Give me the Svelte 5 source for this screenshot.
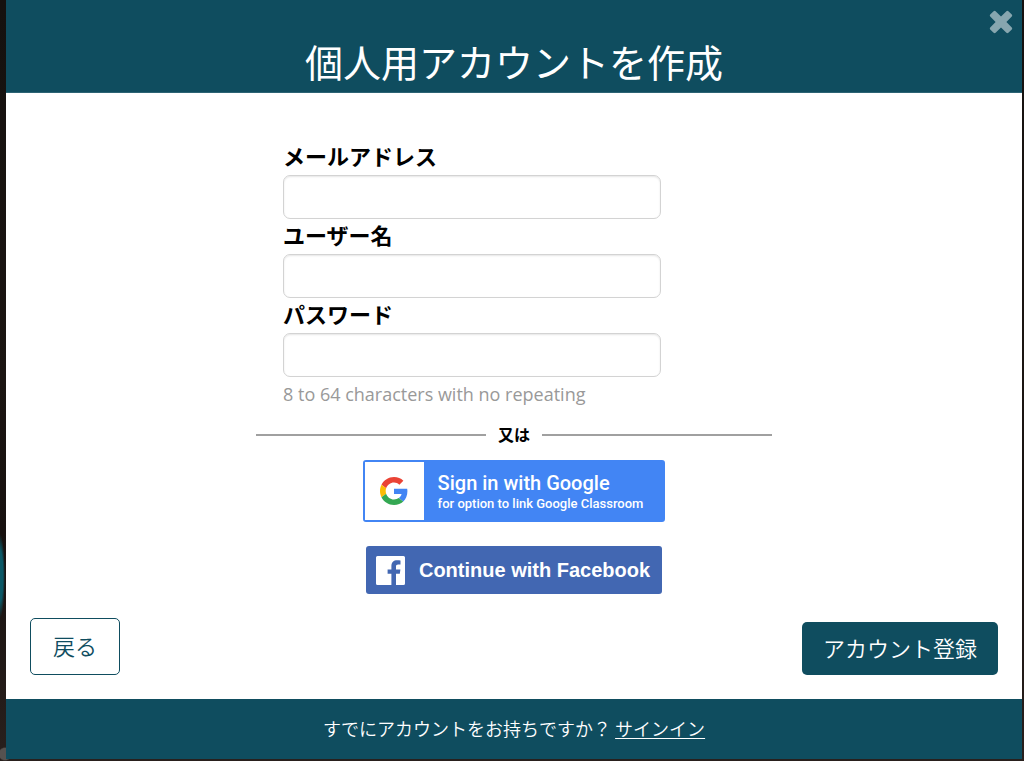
<script>
  let email = $state('');
  let username = $state('');
  let password = $state('');
</script>

<div class="backdrop">
  <section class="dialog" aria-labelledby="title">
    <header>
      <h1 id="title">個人用アカウントを作成</h1>
      <button class="close" type="button" aria-label="閉じる">
        <svg viewBox="0 0 24 24" width="24" height="24" aria-hidden="true">
          <path d="M6.6 1.2 12 6.6l5.4-5.4q1-.9 2 0l3.4 3.4q.9 1 0 2L17.400 12l5.400 5.400q.9 1 0 2l-3.400 3.400q-1 .9-2 0L12 17.400l-5.400 5.400q-1 .9-2 0l-3.400-3.400q-.9-1 0-2L6.600 12 1.200 6.600q-.9-1 0-2l3.400-3.400q1-.9 2 0z" />
        </svg>
      </button>
    </header>

    <form onsubmit={(event) => event.preventDefault()}>
      <div class="center">
        <div class="fields">
          <label for="email">メールアドレス</label>
          <input id="email" type="email" bind:value={email} />
          <label for="username">ユーザー名</label>
          <input id="username" type="text" bind:value={username} />
          <label for="password">パスワード</label>
          <input id="password" type="password" bind:value={password} aria-describedby="hint" />
          <p id="hint">8 to 64 characters with no repeating</p>
        </div>

        <div class="divider"><span>又は</span></div>

        <div class="social">
          <button class="google" type="button">
            <span class="mark">
              <svg viewBox="0 0 48 48" width="28" height="28" aria-hidden="true">
                <path fill="#ea4335" d="M24 9.500c3.540 0 6.710 1.220 9.210 3.600l6.850-6.850C35.900 2.380 30.470 0 24 0 14.620 0 6.510 5.380 2.560 13.220l7.980 6.190C12.430 13.720 17.740 9.500 24 9.500z" />
                <path fill="#4285f4" d="M46.980 24.550c0-1.570-.15-3.090-.38-4.550H24v9.020h12.940c-.58 2.960-2.260 5.480-4.780 7.180l7.730 6c4.510-4.180 7.090-10.360 7.090-17.650z" />
                <path fill="#fbbc05" d="M10.530 28.590c-.48-1.450-.76-2.990-.76-4.590s.27-3.140.76-4.590l-7.980-6.190C.92 16.460 0 20.120 0 24s.92 7.540 2.560 10.780l7.970-6.190z" />
                <path fill="#34a853" d="M24 48c6.480 0 11.930-2.130 15.890-5.810l-7.730-6c-2.150 1.450-4.920 2.300-8.160 2.300-6.260 0-11.570-4.220-13.470-9.910l-7.980 6.190C6.510 42.620 14.620 48 24 48z" />
              </svg>
            </span>
            <span class="copy">
              <span class="main">Sign in with Google</span>
              <span class="sub">for option to link Google Classroom</span>
            </span>
          </button>

          <button class="facebook" type="button">
            <svg viewBox="0 0 29 29" width="29" height="29" aria-hidden="true">
              <path fill="#fff" d="M1.500 0h26A1.500 1.500 0 0 1 29 1.500v26a1.500 1.500 0 0 1-1.500 1.500H20V17.800h3.800l.6-4.400H20v-2.800c0-1.300.4-2.100 2.200-2.100h2.300V4.500c-.4-.1-1.800-.2-3.400-.2-3.400 0-5.700 2-5.700 5.800v3.300h-3.800v4.400h3.800V29H1.500A1.500 1.500 0 0 1 0 27.500v-26A1.500 1.500 0 0 1 1.500 0z" />
            </svg>
            <span>Continue with Facebook</span>
          </button>
        </div>
      </div>

      <div class="actions">
        <button class="back" type="button">戻る</button>
        <button class="submit" type="submit">アカウント登録</button>
      </div>
    </form>

    <footer>
      <span>すでにアカウントをお持ちですか？</span>
      <a href="#signin">サインイン</a>
    </footer>
  </section>
</div>

<style>
  :global(body) {
    margin: 0;
    background: #15110f;
  }

  .backdrop {
    box-sizing: border-box;
    min-height: 100vh;
    padding: 0 2px 2px 6px;
    display: flex;
    background:
      radial-gradient(ellipse 5px 42px at 0 576px, #0b5866 0 60%, transparent),
      radial-gradient(circle 7px at 5px 754px, #565250 0 80%, transparent),
      linear-gradient(#15110f, #1b1512 50%, #17110f 70%, #29201d);
    font-family: "Open Sans", "Noto Sans CJK JP", sans-serif;
  }

  .dialog {
    flex: 1;
    min-width: 0;
    display: flex;
    flex-direction: column;
    background: #fff;
  }

  header {
    position: relative;
    padding: 32px 48px 0;
    background: #0f4d5f;
    border-bottom: 1px solid #2c6374;
    color: #fff;
    text-align: center;
  }

  h1 {
    margin: 0;
    font-size: 38px;
    line-height: 60px;
    font-weight: 400;
  }

  button {
    font-family: inherit;
    cursor: pointer;
  }

  .close {
    position: absolute;
    top: 10px;
    right: 9px;
    padding: 0;
    border: 0;
    background: none;
    line-height: 0;
  }

  .close path {
    fill: #87a6af;
  }

  form {
    flex: 1;
    display: flex;
    flex-direction: column;
    padding: 47px 24px 24px;
  }

  .center {
    width: 100%;
    max-width: 516px;
    margin: 0 auto;
  }

  .fields {
    max-width: 378px;
    margin-left: 27px;
  }

  label {
    display: block;
    padding-bottom: 2px;
    font-size: 22px;
    line-height: 33px;
    font-weight: 700;
    color: #000;
  }

  input {
    display: block;
    box-sizing: border-box;
    width: 100%;
    height: 44px;
    padding: 8px 12px;
    border: 1px solid #d3d3d3;
    border-radius: 7px;
    background: #fff;
    box-shadow: inset 0 1px 2px #0000001a;
    font-family: inherit;
    font-size: 18px;
  }

  #hint {
    margin: 3px 0 0;
    font-size: 18px;
    line-height: 28px;
    color: #999;
  }

  .divider {
    display: flex;
    align-items: center;
    gap: 12px;
    margin-top: 15px;
    font-size: 16px;
    line-height: 24px;
    font-weight: 700;
    color: #000;
  }

  .divider::before,
  .divider::after {
    content: "";
    flex: 1;
    height: 2px;
    background: #a0a0a0;
  }

  .social {
    display: flex;
    flex-direction: column;
    align-items: center;
    gap: 24px;
    margin-top: 13px;
  }

  .google {
    display: flex;
    align-items: stretch;
    height: 62px;
    padding: 0 20px 0 0;
    border: 2px solid #4285f4;
    border-radius: 3px;
    background: #4285f4;
    color: #fff;
    font-family: Roboto, sans-serif;
    text-align: left;
  }

  .mark {
    display: flex;
    align-items: center;
    justify-content: center;
    width: 59px;
    background: #fff;
  }

  .copy {
    display: flex;
    flex-direction: column;
    justify-content: center;
    padding: 1px 0 0 14px;
    font-weight: 500;
  }

  .main {
    font-size: 20px;
    line-height: 24px;
  }

  .sub {
    font-size: 13px;
    line-height: 18px;
  }

  .facebook {
    display: flex;
    align-items: center;
    gap: 14px;
    height: 48px;
    padding: 0 12px 0 10px;
    border: 0;
    border-radius: 3px;
    background: #4267b2;
    color: #fff;
    font-family: "Liberation Sans", Arial, sans-serif;
    font-size: 20px;
    font-weight: 700;
  }

  .actions {
    display: flex;
    justify-content: space-between;
    align-items: flex-end;
    margin-top: auto;
  }

  .back,
  .submit {
    border-radius: 5px;
    font-size: 22px;
    line-height: 33px;
    font-weight: 350;
  }

  .back {
    padding: 11px 22px;
    border: 1px solid #0f4d5f;
    background: #fff;
    color: #0f4d5f;
  }

  .submit {
    padding: 10px 21px;
    border: 0;
    background: #0f4d5f;
    color: #fff;
  }

  footer {
    display: flex;
    flex-wrap: wrap;
    justify-content: center;
    gap: 4px;
    padding: 16px;
    background: #0f4d5f;
    color: #fff;
    font-size: 18px;
    line-height: 28px;
    font-weight: 350;
  }

  a {
    color: inherit;
    text-underline-offset: 2px;
  }
</style>
